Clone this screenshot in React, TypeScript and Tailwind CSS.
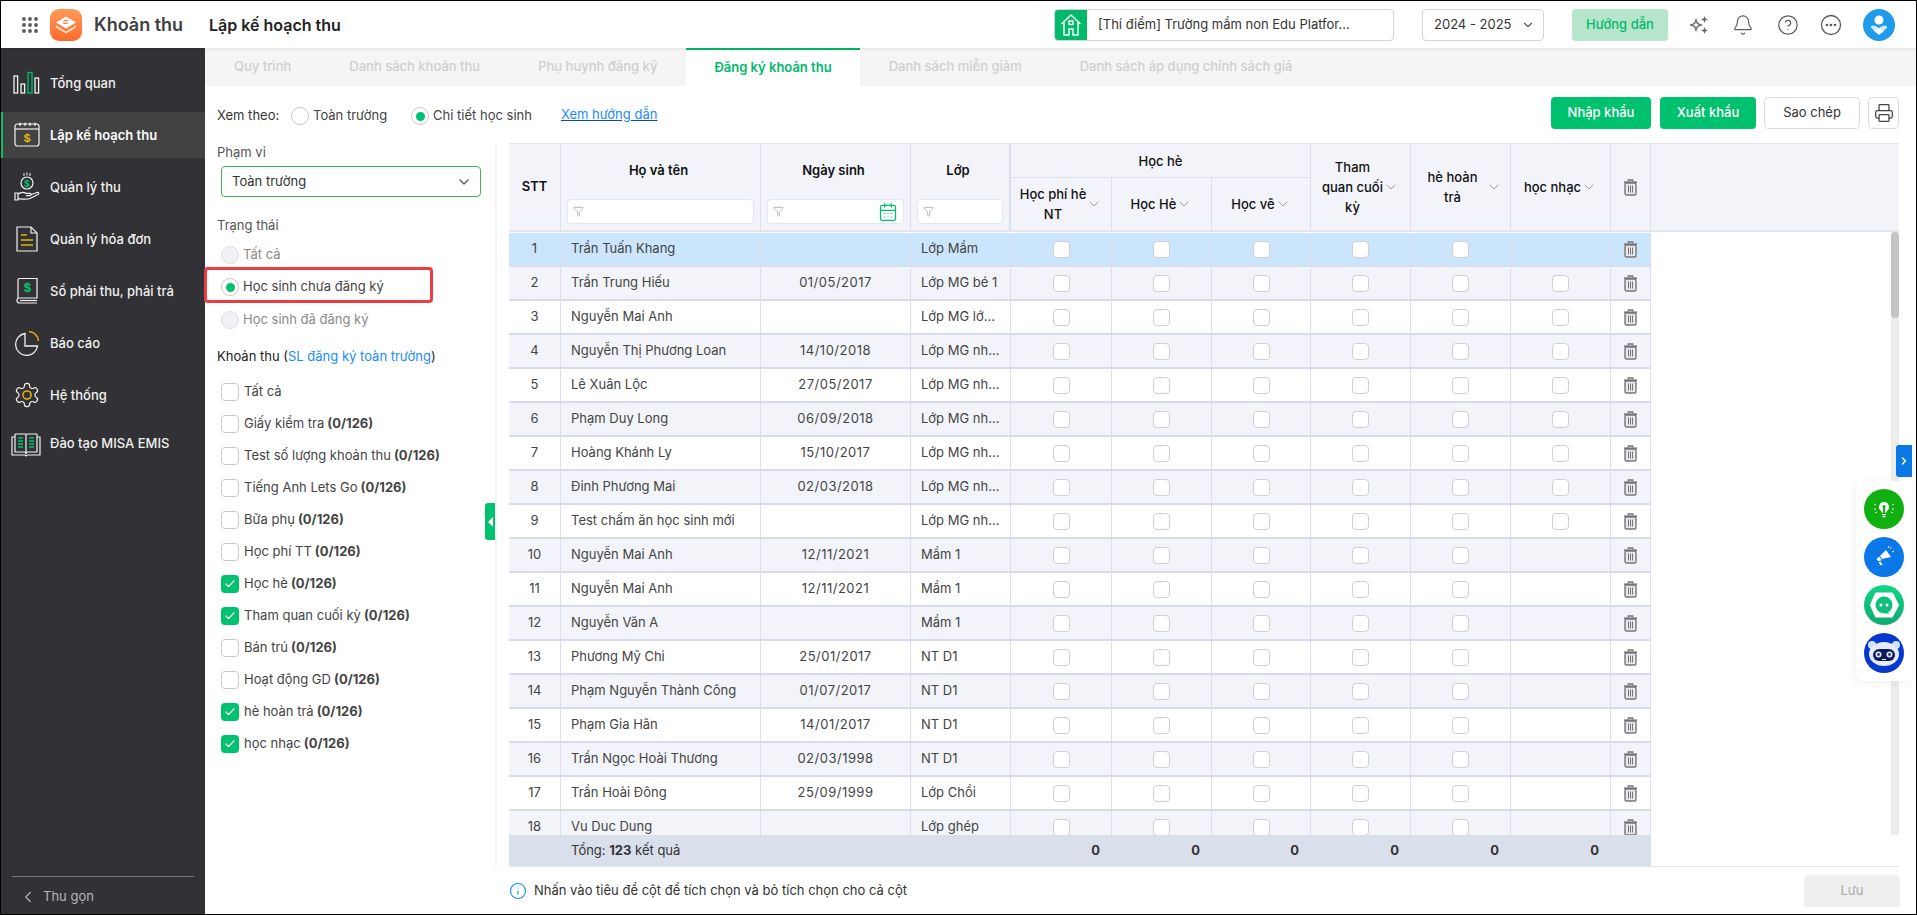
import React from "react";
import { Bell, ChevronDown, ChevronLeft, ChevronRight, CircleHelp, Funnel, CalendarDays, Printer, Check, Info } from "lucide-react";

const Y = "#e8b40c";
const G = "#00c16e";
const W = "#f2f2f2";

function IconOverview() {
  return (
    <svg width="28" height="24" viewBox="0 0 28 24" fill="none" stroke={W} strokeWidth="1.3">
      <rect x="1" y="5" width="3.6" height="17" />
      <rect x="8" y="13" width="3.6" height="9" />
      <rect x="15" y="1.5" width="4" height="20.5" stroke={G} />
      <rect x="22" y="7" width="3.6" height="15" />
    </svg>
  );
}
function IconPlan() {
  return (
    <svg width="28" height="28" viewBox="0 0 28 28" fill="none" stroke={W} strokeWidth="1.2">
      <rect x="2" y="3" width="24" height="22" rx="2.5" />
      <path d="M2 8h24" />
      <path d="M7 1.8v3M12 1.8v3M17 1.8v3M22 1.8v3" strokeWidth="1.6" />
      <text x="14" y="21" fontSize="11" fontWeight="700" fill={Y} stroke="none" textAnchor="middle" fontFamily="Inter">$</text>
    </svg>
  );
}
function IconCollect() {
  return (
    <svg width="28" height="30" viewBox="0 0 28 30" fill="none" stroke={W} strokeWidth="1.2">
      <path d="M11 1v3M14 0.5v3M17 1v3" strokeWidth="1" />
      <circle cx="14" cy="11" r="6" />
      <text x="14" y="14.5" fontSize="9" fontWeight="700" fill={G} stroke="none" textAnchor="middle" fontFamily="Inter">$</text>
      <path d="M2 21h3v7H2zM5 22c3-2 6-2 8-.7h4c1.6 0 1.6 2.4 0 2.4h-4M17 23l7-2.500c1.600-.5 2.400 1.200 1 2l-8 4c-3 1.200-8 .5-12 .2" />
    </svg>
  );
}
function IconInvoice() {
  return (
    <svg width="24" height="28" viewBox="0 0 24 28" fill="none" stroke={W} strokeWidth="1.2">
      <path d="M2 2h14l6 6v18H2z" />
      <path d="M16 2v6h6" />
      <path d="M6 10h6M6 15h12M6 20h12" stroke={Y} strokeWidth="1.5" />
    </svg>
  );
}
function IconBook() {
  return (
    <svg width="24" height="28" viewBox="0 0 24 28" fill="none" stroke={W} strokeWidth="1.2">
      <path d="M3 21V3a1.500 1.500 0 0 1 1.500-1.500H22V21H4.500C3 21 2 22 2 23.500S3 26 4.500 26H22" />
      <path d="M5 23.500h17" />
      <text x="12.500" y="15" fontSize="12" fontWeight="700" fill={G} stroke="none" textAnchor="middle" fontFamily="Inter">$</text>
    </svg>
  );
}
function IconReport() {
  return (
    <svg width="26" height="26" viewBox="0 0 26 26" fill="none" stroke={W} strokeWidth="1.3">
      <path d="M11 3.500a11 11 0 1 0 12.500 12.500H11z" />
      <path d="M15 1.500A10 10 0 0 1 24.500 11" stroke={Y} strokeWidth="1.5" />
    </svg>
  );
}
function IconGear() {
  return (
    <svg width="28" height="28" viewBox="0 0 24 24" fill="none" stroke={W} strokeWidth="1">
      <path d="M12.220 2h-.440a2 2 0 0 0-2 2v.180a2 2 0 0 1-1 1.730l-.430.250a2 2 0 0 1-2 0l-.150-.080a2 2 0 0 0-2.730.730l-.220.380a2 2 0 0 0 .730 2.730l.150.100a2 2 0 0 1 1 1.720v.510a2 2 0 0 1-1 1.740l-.150.090a2 2 0 0 0-.730 2.730l.220.380a2 2 0 0 0 2.730.730l.150-.080a2 2 0 0 1 2 0l.430.250a2 2 0 0 1 1 1.730V20a2 2 0 0 0 2 2h.440a2 2 0 0 0 2-2v-.180a2 2 0 0 1 1-1.730l.430-.250a2 2 0 0 1 2 0l.150.080a2 2 0 0 0 2.730-.730l.220-.390a2 2 0 0 0-.730-2.730l-.150-.080a2 2 0 0 1-1-1.740v-.500a2 2 0 0 1 1-1.740l.150-.090a2 2 0 0 0 .730-2.730l-.220-.380a2 2 0 0 0-2.730-.730l-.150.080a2 2 0 0 1-2 0l-.430-.250a2 2 0 0 1-1-1.730V4a2 2 0 0 0-2-2z" />
      <circle cx="12" cy="12" r="3.500" stroke={Y} strokeWidth="1.300" />
    </svg>
  );
}
function IconTraining() {
  return (
    <svg width="30" height="26" viewBox="0 0 30 26" fill="none" stroke={W} strokeWidth="1.2">
      <path d="M4 3h10c.6 0 1 .4 1 1v19M26 3H16c-.6 0-1 .4-1 1" />
      <path d="M4 3v18h10l1 1 1-1h10V3" />
      <path d="M4 6H1v18h13l1 1 1-1h13V6h-3" />
      <path d="M7 7h5M7 10h5M7 13h5M7 16h5M18 7h5M18 10h5M18 13h5M18 16h5" stroke={G} strokeWidth="1.600" />
    </svg>
  );
}
function Logo() {
  return (
    <svg width="32" height="32" viewBox="0 0 32 32">
      <defs>
        <linearGradient id="lg" x1="0" y1="0" x2="0" y2="1">
          <stop offset="0" stopColor="#ff9a5a" />
          <stop offset="1" stopColor="#ff6a2b" />
        </linearGradient>
      </defs>
      <rect width="32" height="32" rx="9" fill="url(#lg)" />
      <path d="M16 7.500l10 6-10 6-10-6z" fill="#fff" />
      <path d="M6 16.500l10 6 10-6v2l-10 6-10-6z" fill="#ffe3d2" />
      <path d="M13.500 12.500c2-2 3-.5 5-1.500M13 14c2 1 3-.5 5 .5" stroke="#ff7a3a" strokeWidth="1.100" fill="none" />
    </svg>
  );
}
function GridDots() {
  const d = [0, 1, 2];
  return (
    <svg width="16" height="16" viewBox="0 0 16 16" fill="#5b5b5f">
      {d.map((r) => d.map((c) => <circle key={`${r}${c}`} cx={2 + c * 6} cy={2 + r * 6} r="1.900" />))}
    </svg>
  );
}
function HomeIcon() {
  return (
    <svg width="22" height="24" viewBox="0 0 22 24" fill="none" stroke="#fff" strokeWidth="1.400">
      <path d="M1.500 11L11 2l9.500 9M4 9v13h5v-6h4v6h5V9" />
      <rect x="9" y="8" width="4" height="3.500" />
    </svg>
  );
}
function Sparkle() {
  return (
    <svg width="22" height="22" viewBox="0 0 22 22" fill="#6a6a6e">
      <path d="M8 4l2 5 5 2-5 2-2 5-2-5-5-2 5-2zM8 7.500L7.200 10l-2.500 1 2.500 1 .8 2.500.8-2.500 2.500-1-2.500-1z" fillRule="evenodd" />
      <path d="M16.500 2l1 2.500 2.500 1-2.500 1-1 2.500-1-2.500-2.500-1 2.500-1zM16.500 13l1 2.500 2.500 1-2.500 1-1 2.500-1-2.500-2.500-1 2.500-1z" />
    </svg>
  );
}
function MoreCircle() {
  return (
    <svg width="22" height="22" viewBox="0 0 22 22" fill="none" stroke="#5b5b5f" strokeWidth="1.300">
      <circle cx="11" cy="11" r="9.500" />
      <circle cx="7" cy="11" r=".7" fill="#5b5b5f" />
      <circle cx="11" cy="11" r=".7" fill="#5b5b5f" />
      <circle cx="15" cy="11" r=".7" fill="#5b5b5f" />
    </svg>
  );
}
function Avatar() {
  return (
    <svg width="32" height="32" viewBox="0 0 32 32">
      <circle cx="16" cy="16" r="16" fill="#1e9bea" />
      <circle cx="16" cy="11" r="4.500" fill="#fff" />
      <path d="M8 17c3-1.500 5 0 8 2 3-2 5-3.500 8-2v2l-8 6-8-6z" fill="#cfeafc" />
      <path d="M10.500 21.500L16 19.500l5.500 2L16 26z" fill="#fff" />
    </svg>
  );
}
function Trash({ size = 15 }: { size?: number }) {
  return (
    <svg width={size} height={size + 2} viewBox="0 0 15 17" fill="none" stroke="#77777b">
      <path d="M1 3.200h13" strokeWidth="1.600" />
      <path d="M5.200 2.500V1h4.600v1.500" strokeWidth="1.300" />
      <rect x="2" y="4" width="11" height="12" rx="1.500" strokeWidth="1.400" fill="#e9e9ec" />
      <path d="M5.500 6.500v7M7.500 6.500v7M9.500 6.500v7" strokeWidth="1" />
    </svg>
  );
}
function Bulb() {
  return (
    <svg width="24" height="24" viewBox="0 0 24 24" fill="#fff">
      <path d="M12 5a5 5 0 0 0-3 9c.7.600 1 1.300 1 2h4c0-.7.300-1.400 1-2a5 5 0 0 0-3-9z" />
      <rect x="10" y="17" width="4" height="1.200" />
      <rect x="10.500" y="19" width="3" height="1.200" />
      <path d="M11 9h2v7h-2z" fill="#10b010" />
      <circle cx="12" cy="9.500" r="1.500" fill="#10b010" />
      <path d="M2 7l2 1M22 7l-2 1M2 12h2M20 12h2M3 16l2-1M21 16l-2-1" stroke="#fff" strokeWidth=".8" />
    </svg>
  );
}
function Mega() {
  return (
    <svg width="24" height="24" viewBox="0 0 24 24" fill="#fff">
      <path d="M14 5l5 7-9 2-2-3z" />
      <path d="M7 11.500l2.500 3.500-3 1.500L4.500 14z" />
      <path d="M8.500 16.500l2 3-1.800 1-2-3z" />
      <path d="M18 4l1.500-1.500M20 7l2-1M16.500 3l.5-2" stroke="#fff" strokeWidth=".9" />
    </svg>
  );
}
function Chat() {
  return (
    <svg width="40" height="40" viewBox="0 0 40 40">
      <defs>
        <linearGradient id="cg" x1="0" y1="0" x2="0" y2="1">
          <stop offset="0" stopColor="#0fd784" />
          <stop offset="1" stopColor="#10a873" />
        </linearGradient>
      </defs>
      <circle cx="20" cy="20" r="20" fill="url(#cg)" />
      <path d="M12 8.500h16L34 20l-6 11.500H12L7 20z" fill="#fff" stroke="#fff" strokeWidth="2" strokeLinejoin="round" />
      <circle cx="20" cy="20" r="8.500" fill="#12c07e" />
      <path d="M20 28l5 1-2-4z" fill="#12c07e" />
      <circle cx="17" cy="20" r="1.500" fill="#fff" />
      <circle cx="23" cy="20" r="1.500" fill="#fff" />
    </svg>
  );
}
function Robot() {
  return (
    <svg width="40" height="40" viewBox="0 0 40 40">
      <circle cx="20" cy="20" r="20" fill="#0637cf" />
      <circle cx="8" cy="12" r="4" fill="#cfe3ff" />
      <circle cx="32" cy="12" r="4" fill="#cfe3ff" />
      <ellipse cx="20" cy="21" rx="15" ry="12" fill="#e4edff" />
      <rect x="9" y="16" width="22" height="12" rx="6" fill="#0c1b5e" />
      <circle cx="14.500" cy="21.500" r="3" fill="#dfe7ff" />
      <circle cx="25.500" cy="21.500" r="3" fill="#dfe7ff" />
      <circle cx="14.500" cy="21.500" r="1.400" fill="#333a60" />
      <circle cx="25.500" cy="21.500" r="1.400" fill="#333a60" />
      <rect x="18" y="26" width="4" height="1" fill="#fff" />
    </svg>
  );
}

const NAV = [
  { t: "Tổng quan", i: <IconOverview /> },
  { t: "Lập kế hoạch thu", i: <IconPlan />, a: true },
  { t: "Quản lý thu", i: <IconCollect /> },
  { t: "Quản lý hóa đơn", i: <IconInvoice /> },
  { t: "Sổ phải thu, phải trả", i: <IconBook /> },
  { t: "Báo cáo", i: <IconReport /> },
  { t: "Hệ thống", i: <IconGear /> },
];

const TABS = ["Quy trình", "Danh sách khoản thu", "Phụ huynh đăng ký", "Đăng ký khoản thu", "Danh sách miễn giảm", "Danh sách áp dụng chính sách giá"];

const FEES: [string, boolean][] = [
  ["Tất cả", false],
  ["Giấy kiểm tra", false],
  ["Test số lượng khoản thu", false],
  ["Tiếng Anh Lets Go", false],
  ["Bữa phụ", false],
  ["Học phí TT", false],
  ["Học hè", true],
  ["Tham quan cuối kỳ", true],
  ["Bán trú", false],
  ["Hoạt động GD", false],
  ["hè hoàn trả", true],
  ["học nhạc", true],
];

const ROWS: [string, string, string][] = [
  ["Trần Tuấn Khang", "", "Lớp Mầm"],
  ["Trần Trung Hiếu", "01/05/2017", "Lớp MG bé 1"],
  ["Nguyễn Mai Anh", "", "Lớp MG lớ..."],
  ["Nguyễn Thị Phương Loan", "14/10/2018", "Lớp MG nh..."],
  ["Lê Xuân Lộc", "27/05/2017", "Lớp MG nh..."],
  ["Phạm Duy Long", "06/09/2018", "Lớp MG nh..."],
  ["Hoàng Khánh Ly", "15/10/2017", "Lớp MG nh..."],
  ["Đinh Phương Mai", "02/03/2018", "Lớp MG nh..."],
  ["Test chấm ăn học sinh mới", "", "Lớp MG nh..."],
  ["Nguyễn Mai Anh", "12/11/2021", "Mầm 1"],
  ["Nguyễn Mai Anh", "12/11/2021", "Mầm 1"],
  ["Nguyễn Văn A", "", "Mầm 1"],
  ["Phương Mỹ Chi", "25/01/2017", "NT D1"],
  ["Phạm Nguyễn Thành Công", "01/07/2017", "NT D1"],
  ["Phạm Gia Hân", "14/01/2017", "NT D1"],
  ["Trần Ngọc Hoài Thương", "02/03/1998", "NT D1"],
  ["Trần Hoài Đông", "25/09/1999", "Lớp Chồi"],
  ["Vu Duc Dung", "", "Lớp ghép"],
];

const COLS = "grid grid-cols-[52px_200px_150px_100px_101px_100px_99px_100px_100px_100px_40px] w-[1142px]";

function Radio({ on, off, label }: { on?: boolean; off?: boolean; label: string }) {
  return (
    <span className="flex items-center">
      <span className={`w-[18px] h-[18px] rounded-full border flex items-center justify-center ${off ? "bg-[#f1f2f7] border-[#dddde2]" : "bg-white border-[#c8c8cc]"}`}>
        {on && <span className="w-[9px] h-[9px] rounded-full bg-[#00c16e]" />}
      </span>
      <span className={`ml-[4px] ${off ? "text-[#8a8a8a]" : "text-[#444]"}`}>{label}</span>
    </span>
  );
}
function Box({ on }: { on?: boolean }) {
  return on ? (
    <span className="w-[18px] h-[18px] rounded-[4px] bg-[#00c16e] flex items-center justify-center shrink-0">
      <Check size={12} color="#fff" strokeWidth={2.500} />
    </span>
  ) : (
    <span className="w-[18px] h-[18px] rounded-[4px] bg-white border border-[#c8c8cc] shrink-0" />
  );
}
function FilterInput({ cal }: { cal?: boolean }) {
  return (
    <div className="mx-[6px] h-[25px] bg-white border border-[#e6e7ee] rounded-[4px] flex items-center justify-between px-[5px]">
      <Funnel size={11} color="#8a8a8a" strokeWidth={1.300} />
      {cal && <CalendarDays size={20} color="#00c16e" strokeWidth={1.500} />}
    </div>
  );
}
function HeadCol({ children }: { children: React.ReactNode }) {
  return <div className="row-span-2 border-r border-[#dcdeea] flex flex-col items-center">{children}</div>;
}
function HeadLabel({ children }: { children: React.ReactNode }) {
  return <div className="h-[55px] pt-[17px] pr-[4px] leading-[18px]">{children}</div>;
}
function SubHead({ lines, wide }: { lines: string[]; wide?: boolean }) {
  return (
    <div className="flex items-center justify-center h-full">
      <div className={`text-center leading-[20px] ${wide ? "w-[66px]" : ""}`}>
        {lines.map((l) => (
          <div key={l}>{l}</div>
        ))}
      </div>
      <ChevronDown size={16} color="#8a8a8a" strokeWidth={1.200} />
    </div>
  );
}

export default function App() {
  return (
    <div className="w-[1917px] h-[915px] border border-black flex flex-col overflow-hidden relative bg-white text-[13px] text-[#444] font-['Inter','Noto_Sans',sans-serif]">
      {/* Header */}
      <header className="h-[47px] shrink-0 flex items-center bg-white relative z-10 shadow-[0_1px_3px_rgba(0,0,0,0.08)]">
        <span className="ml-[21px] flex"><GridDots /></span>
        <span className="ml-[12px] flex"><Logo /></span>
        <span className="ml-[12px] text-[18px] font-semibold text-[#3f3f42] w-[115px]">Khoản thu</span>
        <span className="text-[16px] font-semibold text-[#222]">Lập kế hoạch thu</span>
        <div className="ml-auto flex items-center">
          <div className="w-[340px] h-[32px] rounded-[4px] border border-[#d5d5d8] flex items-center overflow-hidden">
            <span className="w-[32px] h-full bg-[#00b96b] flex items-center justify-center"><HomeIcon /></span>
            <span className="ml-[11px] text-[#333]">[Thí điểm] Trường mầm non Edu Platfor...</span>
          </div>
          <div className="ml-[28px] w-[122px] h-[32px] rounded-[4px] border border-[#d5d5d8] flex items-center justify-between pl-[11px] pr-[8px] text-[#333]">
            <span>2024 - 2025</span>
            <ChevronDown size={14} color="#555" />
          </div>
          <div className="ml-[28px] w-[96px] h-[32px] rounded-[4px] bg-[#b6e5cb] text-[#00b96b] font-medium flex items-center justify-center">Hướng dẫn</div>
          <span className="ml-[20px] flex"><Sparkle /></span>
          <span className="ml-[22px] flex"><Bell size={22} color="#5b5b5f" strokeWidth={1.300} /></span>
          <span className="ml-[23px] flex"><CircleHelp size={22} color="#5b5b5f" strokeWidth={1.300} /></span>
          <span className="ml-[21px] flex"><MoreCircle /></span>
          <span className="ml-[21px] mr-[21px] flex"><Avatar /></span>
        </div>
      </header>

      <div className="flex-1 flex min-h-0">
        {/* Sidebar */}
        <aside className="w-[204px] shrink-0 bg-[#323135] flex flex-col text-[#f0f0f0] font-medium pt-[9px]">
          {NAV.map((n) => (
            <div key={n.t} className="h-[52px] flex items-center">
              <div className={`h-[46px] w-full flex items-center border-l-[2px] ${n.a ? "border-[#00c16e] bg-[#424242] font-semibold text-white" : "border-transparent"}`}>
                <span className="w-[47px] flex justify-center shrink-0">{n.i}</span>
                <span className="pt-[2px]">{n.t}</span>
              </div>
            </div>
          ))}
          <div className="h-[46px] flex items-center">
            <span className="w-[49px] flex justify-center shrink-0"><IconTraining /></span>
            <span>Đào tạo MISA EMIS</span>
          </div>
          <div className="mt-auto mx-[11px] border-t border-[#77777a] h-[38px] pt-[2px] flex items-center text-[#b5b5b8] font-normal">
            <ChevronLeft size={18} color="#b5b5b8" strokeWidth={1.500} className="ml-[7px]" />
            <span className="ml-[6px]">Thu gọn</span>
          </div>
        </aside>

        {/* Main */}
        <main className="flex-1 min-w-0 flex flex-col">
          <nav className="h-[38px] shrink-0 bg-[#f5f5f5] flex font-medium text-[#cfcfcf]">
            {TABS.map((t, i) => (
              <div key={t} className={`flex items-center ${i === 3 ? "px-[28px] bg-white text-[#00b96b] font-semibold border-t-2 border-[#00b96b]" : "px-[29px]"}`}>{t}</div>
            ))}
          </nav>

          <div className="h-[57px] shrink-0 pt-[11px] pl-[12px] pr-[17px] flex justify-between">
            <div className="h-[32px] flex items-center pt-[6px]">
              <span className="text-[#333] w-[74px]">Xem theo:</span>
              <Radio label="Toàn trường" />
              <span className="ml-[24px]"><Radio on label="Chi tiết học sinh" /></span>
              <a className="ml-[29px] mb-[3px] text-[#1a8cff] underline decoration-[#0b4fa8]">Xem hướng dẫn</a>
            </div>
            <div className="flex">
              <button className="w-[100px] h-[32px] rounded-[4px] bg-[#00c16e] text-white font-medium">Nhập khẩu</button>
              <button className="ml-[9px] w-[96px] h-[32px] rounded-[4px] bg-[#00c16e] text-white font-medium">Xuất khẩu</button>
              <button className="ml-[8px] w-[96px] h-[32px] rounded-[4px] bg-white border border-[#dcdce0] text-[#333]">Sao chép</button>
              <button className="ml-[8px] w-[31px] h-[32px] rounded-[4px] bg-white border border-[#dcdce0] flex items-center justify-center">
                <Printer size={20} color="#444" strokeWidth={1.500} />
              </button>
            </div>
          </div>

          <div className="flex-1 min-h-0 flex">
            {/* Left filter panel */}
            <section className="w-[292px] shrink-0 pl-[12px] relative border-r-[2px] border-[#f3f3f6]">
              <div className="h-[18px] leading-[18px] text-[#555]">Phạm vi</div>
              <div className="mt-[5px] ml-[4px] w-[260px] h-[31px] rounded-[4px] border border-[#4caf50] flex items-center justify-between pl-[10px] pr-[8px] text-[#333]">
                <span>Toàn trường</span>
                <ChevronDown size={16} color="#555" />
              </div>
              <div className="mt-[19px] h-[18px] leading-[18px] text-[#555]">Trạng thái</div>
              <div className="mt-[5px] ml-[4px] h-[32px] flex items-center"><Radio off label="Tất cả" /></div>
              <div className="ml-[4px] h-[32px] flex items-center relative">
                <Radio on label="Học sinh chưa đăng ký" />
                <span className="absolute left-[-17px] top-[-4px] w-[229px] h-[36px] border-[3px] border-[#ef3b42] rounded-[4px]" />
              </div>
              <div className="mt-[1px] ml-[4px] h-[32px] flex items-center"><Radio off label="Học sinh đã đăng ký" /></div>
              <div className="mt-[11px] h-[18px] leading-[18px] text-[#222]">
                Khoản thu (<span className="text-[#1a8cff]">SL đăng ký toàn trường</span>)
              </div>
              <div className="mt-[11px] ml-[4px]">
                {FEES.map(([name, on], i) => (
                  <div key={name} className="h-[32px] flex items-center">
                    <Box on={on} />
                    <span className="ml-[5px]">
                      {name}
                      {i > 0 && <b className="font-bold text-[#444]"> (0/126)</b>}
                    </span>
                  </div>
                ))}
              </div>
              <button className="absolute right-0 top-[360px] w-[10px] h-[37px] bg-[#00c16e] rounded-l-[3px] flex items-center justify-center">
                <span className="w-0 h-0 border-y-[5px] border-y-transparent border-r-[5px] border-r-white" />
              </button>
            </section>

            {/* Table */}
            <section className="ml-[12px] w-[1390px] h-[724px] flex flex-col border-y border-[#e5e6ec] shrink-0">
              <div className="h-[88px] shrink-0 bg-[#f3f4f9] border-b-[2px] border-[#e4e5ea]">
                <div className={`${COLS} grid-rows-[34px_52px] h-full font-semibold text-[#111]`}>
                  <HeadCol>
                    <div className="h-full flex items-center">STT</div>
                  </HeadCol>
                  <HeadCol>
                    <HeadLabel>Họ và tên</HeadLabel>
                    <div className="w-full"><FilterInput /></div>
                  </HeadCol>
                  <HeadCol>
                    <HeadLabel>Ngày sinh</HeadLabel>
                    <div className="w-full"><FilterInput cal /></div>
                  </HeadCol>
                  <div className="row-span-2 border-r-[2px] border-[#dcdeea] flex flex-col items-center">
                    <HeadLabel>Lớp</HeadLabel>
                    <div className="w-full"><FilterInput /></div>
                  </div>
                  <div className="col-span-3 border-r border-b border-[#dcdeea] flex items-center justify-center font-medium pt-[2px]">Học hè</div>
                  <div className="row-span-2 border-r border-[#dcdeea] font-medium"><SubHead lines={["Tham", "quan cuối", "kỳ"]} /></div>
                  <div className="row-span-2 border-r border-[#dcdeea] font-medium"><SubHead wide lines={["hè hoàn", "trả"]} /></div>
                  <div className="row-span-2 border-r border-[#dcdeea] font-medium"><SubHead lines={["học nhạc"]} /></div>
                  <div className="row-span-2 border-r border-[#dcdeea] flex items-center justify-center"><Trash size={15} /></div>
                  <div className="border-r border-[#dcdeea] font-medium"><SubHead lines={["Học phí hè", "NT"]} /></div>
                  <div className="border-r border-[#dcdeea] font-medium"><SubHead lines={["Học Hè"]} /></div>
                  <div className="border-r border-[#dcdeea] font-medium"><SubHead lines={["Học vẽ"]} /></div>
                </div>
              </div>

              <div className="flex-1 min-h-0 flex overflow-hidden">
                <div className="w-[1142px] shrink-0 pt-[1px]">
                  {ROWS.map((r, i) => {
                    const bg = i === 0 ? "bg-[#cbe5fc]" : i % 2 === 1 ? "bg-[#f3f4f9]" : "bg-white";
                    const cell = "border-r border-[#dcdeea] flex items-center";
                    return (
                      <div key={i} className={`${COLS} h-[34px] border-b-[2px] border-[#d8dbea] ${bg}`}>
                        <div className={`${cell} justify-center`}>{i + 1}</div>
                        <div className={`${cell} pl-[10px]`}>{r[0]}</div>
                        <div className={`${cell} justify-center tracking-[0.5px]`}>{r[1]}</div>
                        <div className={`${cell} pl-[10px]`}>{r[2]}</div>
                        {[0, 1, 2, 3, 4].map((c) => (
                          <div key={c} className={`${cell} justify-center`}>
                            <span className="w-[17px] h-[17px] rounded-[4px] bg-white border border-[#d0d0d4]" />
                          </div>
                        ))}
                        <div className={`${cell} justify-center`}>
                          {i >= 1 && i <= 8 && <span className="w-[17px] h-[17px] rounded-[4px] bg-white border border-[#d0d0d4]" />}
                        </div>
                        <div className={`${cell} justify-center`}><Trash /></div>
                      </div>
                    );
                  })}
                </div>
                <div className="flex-1" />
                <div className="w-[8px] bg-[#ececec] shrink-0">
                  <div className="h-[86px] bg-[#c4c4c4] rounded-[4px]" />
                </div>
              </div>

              <div className="h-[31px] shrink-0 flex">
                <div className={`${COLS} bg-[#d9e0ec] font-bold text-[#333]`}>
                  <div />
                  <div className="pl-[10px] flex items-center font-normal">Tổng:&nbsp;<b className="font-bold">123</b>&nbsp;kết quả</div>
                  <div />
                  <div />
                  {[0, 1, 2, 3, 4, 5].map((c) => (
                    <div key={c} className="flex items-center justify-end pr-[12px]">0</div>
                  ))}
                  <div />
                </div>
              </div>
            </section>
          </div>

          <div className="h-[47px] shrink-0 flex items-center pl-[304px] pr-[16px]">
            <Info size={18} color="#1a8cff" strokeWidth={1.500} />
            <span className="ml-[7px] text-[#333]">Nhấn vào tiêu đề cột để tích chọn và bỏ tích chọn cho cả cột</span>
            <button className="ml-auto w-[96px] h-[32px] rounded-[4px] bg-[#efefef] text-[#a8a8a8]">Lưu</button>
          </div>
        </main>
      </div>

      {/* Floating widgets */}
      <button className="absolute right-[4px] top-[444px] w-[16px] h-[32px] bg-[#0a78e6] rounded-l-[3px] flex items-center justify-center">
        <ChevronRight size={12} color="#fff" strokeWidth={3} />
      </button>
      <div className="absolute right-[4px] top-[480px] w-[56px] h-[200px] bg-white rounded-l-[8px] shadow-[-2px_2px_10px_rgba(0,0,0,0.06)] flex flex-col items-center justify-center gap-[8px]">
        <span className="w-[40px] h-[40px] rounded-full bg-[#10b010] flex items-center justify-center"><Bulb /></span>
        <span className="w-[40px] h-[40px] rounded-full bg-[#0a78e6] flex items-center justify-center"><Mega /></span>
        <span className="flex"><Chat /></span>
        <span className="flex"><Robot /></span>
      </div>
    </div>
  );
}
